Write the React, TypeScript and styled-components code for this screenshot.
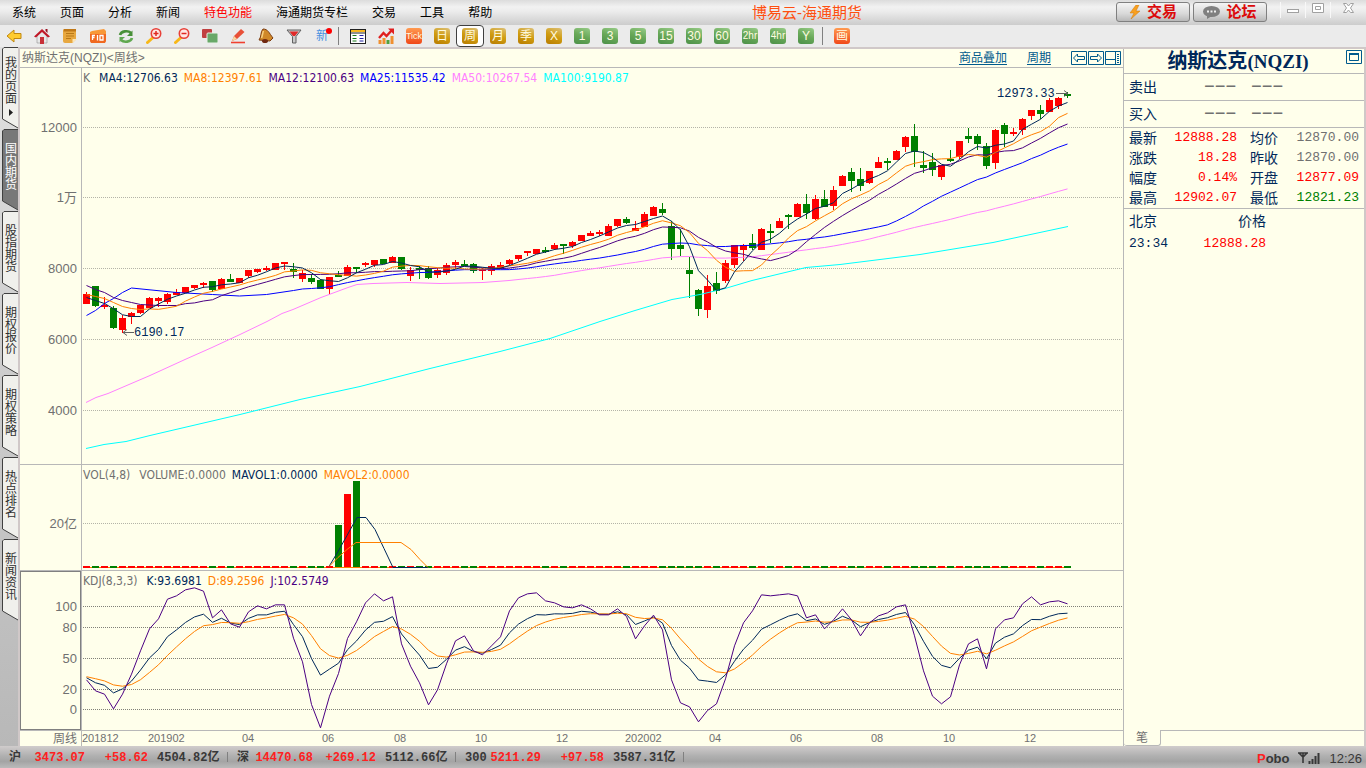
import React from 'react';
import styled, { createGlobalStyle } from 'styled-components';

const C = {
  paper: '#ffffeb',
  rule: '#b8b8b8',
  frame: '#d0c8c8',
  navy: '#00285a',
  orange: '#ff8000',
  indigo: '#4b0082',
  blue: '#0000ff',
  pink: '#ff80ff',
  cyan: '#00ffff',
  gray: '#707070',
  red: '#ff0000',
  green: '#008000',
  teal: '#005a8c',
};

const sans = `"Liberation Sans", "Noto Sans CJK SC", sans-serif`;
const mono = `"Liberation Mono", "Noto Sans CJK SC", monospace`;
const legendFont = `"DejaVu Sans Condensed", "DejaVu Sans", "Noto Sans CJK SC", sans-serif`;

const GlobalStyle = createGlobalStyle`
  * { box-sizing: border-box; }
  body { margin: 0; font-family: ${sans}; font-size: 12px; color: #000; }
  button { font-family: inherit; padding: 0; margin: 0; border: 0; background: none; color: inherit; }
  svg { display: block; }
  table { border-collapse: collapse; }
`;

/* ---------- data ---------- */

type Candle = [up: number, top: number, bottom: number, high: number, low: number];

const candles: Candle[] = [
  [1, 294, 304, 292, 304], [0, 286, 306, 286, 307], [1, 305, 306, 297, 309], [0, 308, 328, 306, 329],
  [1, 318, 330, 315, 333], [1, 313, 317, 312, 324], [1, 305, 313, 305, 314], [1, 298, 308, 297, 308],
  [1, 298, 301, 297, 307], [1, 294, 302, 293, 304], [1, 292, 295, 289, 295], [1, 287, 293, 287, 293],
  [1, 285, 288, 285, 289], [1, 283, 284, 282, 288], [0, 281, 290, 281, 292], [1, 279, 289, 278, 289],
  [0, 279, 282, 274, 282], [1, 278, 283, 278, 283], [1, 270, 276, 270, 278], [1, 269, 272, 269, 273],
  [1, 268, 270, 266, 271], [1, 263, 270, 263, 270], [1, 262, 264, 262, 270], [0, 269, 272, 263, 278],
  [1, 273, 279, 270, 282], [0, 278, 282, 274, 284], [0, 280, 289, 279, 289], [1, 277, 289, 277, 294],
  [0, 275, 276, 271, 277], [1, 267, 276, 265, 276], [0, 267, 269, 267, 273], [1, 263, 264, 262, 267],
  [1, 260, 265, 260, 267], [0, 259, 264, 259, 264], [1, 257, 263, 256, 263], [0, 257, 269, 257, 270],
  [1, 270, 276, 267, 281], [0, 268, 269, 266, 279], [0, 268, 278, 266, 279], [1, 270, 275, 268, 278],
  [1, 265, 273, 263, 275], [1, 262, 265, 260, 269], [0, 264, 265, 260, 266], [0, 264, 271, 263, 273],
  [1, 269, 271, 268, 280], [1, 266, 271, 264, 275], [1, 265, 268, 262, 269], [1, 260, 264, 259, 265],
  [1, 255, 259, 255, 261], [1, 251, 253, 251, 256], [1, 249, 254, 249, 254], [0, 250, 251, 247, 253],
  [1, 245, 249, 243, 250], [0, 244, 246, 244, 254], [1, 242, 246, 241, 248], [1, 235, 241, 235, 241],
  [1, 233, 236, 231, 236], [1, 232, 234, 230, 236], [1, 226, 236, 224, 236], [1, 219, 226, 219, 227],
  [0, 219, 223, 217, 224], [1, 228, 231, 221, 231], [1, 214, 227, 212, 227], [1, 207, 216, 206, 216],
  [0, 209, 213, 203, 215], [0, 226, 249, 221, 260], [0, 245, 249, 229, 256], [0, 270, 274, 257, 298],
  [0, 290, 309, 289, 316], [1, 286, 310, 275, 318], [0, 283, 291, 272, 294], [1, 263, 281, 260, 283],
  [1, 245, 265, 245, 268], [1, 245, 250, 244, 261], [0, 243, 248, 234, 250], [1, 229, 250, 228, 250],
  [0, 231, 233, 224, 243], [1, 221, 228, 218, 228], [0, 215, 216, 214, 229], [1, 204, 217, 203, 217],
  [0, 204, 213, 194, 219], [1, 199, 219, 195, 220], [0, 199, 207, 190, 207], [1, 190, 206, 186, 210],
  [1, 176, 186, 175, 186], [0, 172, 181, 168, 192], [0, 179, 186, 168, 191], [1, 171, 183, 171, 184],
  [1, 162, 168, 157, 168], [0, 161, 162, 158, 170], [1, 151, 160, 150, 160], [1, 137, 147, 136, 152],
  [0, 136, 152, 124, 167], [0, 165, 168, 151, 173], [0, 162, 170, 153, 176], [1, 165, 177, 165, 180],
  [0, 159, 160, 150, 162], [1, 141, 157, 141, 159], [0, 136, 139, 128, 143], [0, 136, 144, 134, 150],
  [0, 146, 166, 143, 169], [1, 130, 163, 129, 169], [0, 125, 134, 123, 147], [1, 132, 133, 128, 136],
  [1, 119, 130, 118, 135], [1, 110, 116, 110, 120], [0, 110, 114, 105, 119], [1, 100, 112, 98, 112],
  [1, 98, 106, 97, 109], [0, 94, 96, 92, 98],
];

const closes = candles.map(([up, top, bottom]) => (up ? top : bottom));

const STEP = 9;
const PRICE_TOP = 68;
const mid = (i: number) => 4.5 + STEP * i;

type Point = [number, number];

/* Moving average; `lead` covers the candles whose window starts before the data. */
function average(n: number, lead: Point[]): Point[] {
  const out = [...lead];
  for (let i = n - 1; i < closes.length; i++) {
    let sum = 0;
    for (let k = 0; k < n; k++) sum += closes[i - k];
    out.push([mid(i), sum / n]);
  }
  return out;
}

const each = (values: number[]): Point[] => values.map((v, i) => [mid(i), v]);
const shift = (points: Point[]): Point[] => points.map(([x, y]) => [x - 82, y]);

const averages: { color: string; points: Point[] }[] = [
  {
    color: C.cyan,
    points: shift([[86, 448], [104, 444], [126, 441], [150, 435], [240, 414], [300, 399], [360, 386], [430, 368],
      [500, 351], [550, 338], [600, 321], [635, 310], [672, 299], [700, 294], [725, 288], [752, 280], [806, 267],
      [840, 264], [880, 259], [920, 254], [993, 242], [1068, 226]]),
  },
  {
    color: C.pink,
    points: average(50, shift([[86, 402], [96, 397], [108, 393], [122, 387], [150, 375], [185, 359], [212, 347],
      [240, 334], [267, 321], [282, 313], [293, 309], [321, 297], [348, 287], [357, 284], [373, 283], [407, 282],
      [440, 283], [483, 282], [509, 280]])),
  },
  {
    color: C.blue,
    points: average(25, [...each([315, 310, 303, 298, 292, 287.5]), [mid(10), 292], [mid(14), 294], [mid(17), 295.5],
      [mid(20), 294], [mid(23), 290]]),
  },
  { color: C.indigo, points: average(12, each([285, 289, 292, 297, 300, 302, 304, 304.5, 305, 305, 305])) },
  { color: C.orange, points: average(8, each([294, 296, 298, 302, 306, 308, 309])) },
  { color: C.navy, points: average(4, each([297, 300, 303])) },
];

/* J values of the KDJ indicator in thirds of a pixel; K and D follow from it. */
const jValues = [
  328, 361, 371, 415, 371, 311, 241, 175, 145, 86, 76, 58, 52, 62, 142, 118, 160, 170, 124, 106, 115, 103, 103, 203,
  274, 402, 472, 377, 309, 204, 154, 97, 70, 91, 79, 220, 287, 337, 403, 358, 280, 211, 196, 241, 253, 226, 199, 121,
  82, 70, 67, 91, 97, 109, 112, 103, 115, 133, 133, 115, 138, 205, 166, 134, 178, 328, 397, 409, 454, 420, 400, 325,
  226, 157, 121, 73, 76, 73, 70, 76, 142, 133, 175, 148, 115, 148, 196, 157, 136, 127, 109, 103, 196, 301, 377, 400,
  379, 283, 220, 205, 295, 175, 148, 142, 100, 79, 103, 94, 91, 100,
];
const kdj = (() => {
  const k: Point[] = [];
  const d: Point[] = [];
  const j: Point[] = [];
  let prev = 317;
  jValues.forEach((v, i) => {
    const kv = (3 * v + 4 * prev) / 7;
    const dv = (2 * prev + kv) / 3;
    k.push([mid(i), kv / 3 - 1]);
    d.push([mid(i), dv / 3 - 1]);
    j.push([mid(i), v / 3 - 1]);
    prev = dv;
  });
  return { k, d, j };
})();

const path = (points: Point[], dy = 0) => points.map(([x, y]) => `${x},${y - dy + 0.5}`).join(' ');

/* ---------- shell ---------- */

const Shell = styled.div`
  min-height: 100vh;
  display: flex;
  flex-direction: column;
  background: ${C.paper};
`;

const MenuBar = styled.header`
  height: 25px;
  display: flex;
  align-items: center;
  background: linear-gradient(#dcdcdc 0, #f2f2f2 28%, #ececec 45%, #cccccc 100%);
`;

const MenuList = styled.nav`
  display: flex;
  gap: 24px;
  padding: 2px 0 0 12px;
`;

const MenuItem = styled.button<{ $hot?: boolean }>`
  font-size: 12px;
  line-height: 23px;
  color: ${(p) => (p.$hot ? C.red : '#000')};
  white-space: nowrap;
`;

const AppTitle = styled.div`
  flex: 1;
  padding-left: 6px;
  text-align: center;
  font-size: 15px;
  line-height: 24px;
  color: #ff4f10;
  white-space: nowrap;
`;

const TitleSide = styled.div`
  display: flex;
  justify-content: flex-end;
  gap: 3px;
  padding-bottom: 1px;
`;

const PillButton = styled.button`
  width: 74px;
  height: 20px;
  display: flex;
  align-items: center;
  justify-content: center;
  gap: 6px;
  border: 1px solid #808080;
  border-radius: 3px;
  background: linear-gradient(#f4f4f4, #d8d8d8 60%, #b8b8b8);
  font-size: 15px;
  font-weight: 700;
  line-height: 18px;
  color: #dc0a0a;
`;

const WindowButtons = styled.div`
  display: flex;
  padding-left: 10px;
`;

const WindowButton = styled.button`
  width: 25px;
  height: 16px;
  display: flex;
  justify-content: center;
  border-left: 1px solid #f8f8f8;
  &:last-child { width: 36px; }
`;

const Toolbar = styled.div`
  height: 24px;
  display: flex;
  background: #ebebeb;
  border-bottom: 2px solid ${C.frame};
`;

const ToolButton = styled.button<{ $active?: boolean }>`
  width: 28px;
  height: 22px;
  display: flex;
  align-items: center;
  justify-content: center;
  border: 1px solid ${(p) => (p.$active ? '#404040' : 'transparent')};
  border-radius: 4px;
  background: ${(p) => (p.$active ? '#fff' : 'none')};
`;

const ToolDivider = styled.i`
  width: 1px;
  height: 18px;
  margin: 2px 5px 0 2px;
  background: #808080;
`;

const chipTones = {
  red: 'linear-gradient(#ff9a50, #f04818)',
  gold: 'linear-gradient(20deg, #b87c00, #d09c10 50%, #dcc078)',
  green: 'linear-gradient(20deg, #4c9048, #68a858 50%, #98cc88)',
};

const Chip = styled.span<{ $tone: keyof typeof chipTones; $size: number }>`
  width: 16px;
  height: 16px;
  flex: none;
  display: flex;
  justify-content: center;
  border-radius: 3px;
  background: ${(p) => chipTones[p.$tone]};
  color: #fffbe0;
  font-size: ${(p) => p.$size}px;
  line-height: 16px;
  white-space: nowrap;
`;

const Body = styled.div`
  flex: 1;
  display: flex;
`;

const TabRail = styled.nav`
  width: 20px;
  margin-top: -2px;
  padding-left: 2px;
  border-right: 2px solid ${C.frame};
  background: linear-gradient(#e0e0e0, #b8b8b8);
`;

const RailTab = styled.button<{ $active?: boolean; $first?: boolean }>`
  position: relative;
  display: flex;
  align-items: flex-start;
  width: 16px;
  height: 82px;
  padding: ${(p) => (p.$first ? 10 : 14)}px 0 0 3px;
  color: ${(p) => (p.$active ? '#fff' : '#303030')};
  font-size: 12px;
  line-height: 12px;
  text-align: left;
`;

const TabShape = styled.svg`
  position: absolute;
  left: 0;
  top: 0;
`;

const TabText = styled.span`
  position: relative;
  display: block;
  width: 12px;
  word-break: break-all;
`;

/* ---------- chart ---------- */

const ChartColumn = styled.main`
  flex: 1;
  min-width: 0;
  display: flex;
  flex-direction: column;
`;

const ChartHead = styled.div`
  height: 19px;
  display: flex;
  align-items: center;
  padding: 0 1px 0 2px;
  border-bottom: 1px solid ${C.rule};
`;

const ChartName = styled.h1`
  flex: 1;
  margin: 0;
  font-size: 12px;
  font-weight: 400;
  line-height: 18px;
  color: ${C.gray};
`;

const HeadLink = styled.a`
  margin-right: 20px;
  font-size: 12px;
  line-height: 16px;
  color: ${C.teal};
  text-underline-offset: 2px;
`;

const HeadButton = styled.button`
  width: 16px;
  height: 14px;
  margin-right: 1px;
`;

const Panel = styled.section<{ $height: number; $grow?: boolean }>`
  flex: ${(p) => (p.$grow ? 1 : 0)} 0 ${(p) => p.$height}px;
  display: flex;
  border-bottom: 1px solid ${C.rule};
  &:last-child { border-bottom: 0; }
`;

const Axis = styled.div<{ $selected?: boolean }>`
  width: 61px;
  flex: none;
  outline: ${(p) => (p.$selected ? '1px solid #808080' : 'none')};
  outline-offset: -1px;
`;

const AxisText = styled.text`
  font: 13px ${sans};
  fill: ${C.gray};
`;

const TimeText = styled.text`
  font: 11px ${sans};
  fill: ${C.gray};
`;

const PeriodText = styled(TimeText)`
  font-size: 12px;
`;

const NoteText = styled.text`
  font: 12px ${mono};
  fill: ${C.navy};
`;

const Plot = styled.div`
  position: relative;
  flex: 1;
  min-width: 0;
  border-left: 1px solid ${C.rule};
`;

const Legend = styled.div`
  position: absolute;
  left: 1px;
  top: 3px;
  display: flex;
  gap: 6px;
  font-family: ${legendFont};
  font-size: 12px;
  line-height: 15px;
  white-space: nowrap;
`;

const LegendItem = styled.span<{ $color: string; $wide?: boolean }>`
  color: ${(p) => p.$color};
  margin-right: ${(p) => (p.$wide ? 3 : 0)}px;
`;

/* ---------- quote panel ---------- */

const QuotePanel = styled.aside`
  width: 243px;
  flex: none;
  display: flex;
  flex-direction: column;
  border-left: 1px solid ${C.rule};
  border-right: 2px solid ${C.frame};
  color: ${C.navy};
`;

const QuoteHead = styled.div`
  height: 25px;
  display: flex;
  padding-right: 1px;
  border-bottom: 1px solid ${C.rule};
`;

const QuoteName = styled.h2`
  flex: 1;
  margin: 0 0 0 6px;
  font-size: 20px;
  line-height: 24px;
  text-align: center;
`;

const QuoteCode = styled.span`
  font-family: "Liberation Serif", serif;
  font-size: 19px;
`;

const QuoteTable = styled.table`
  width: 100%;
  table-layout: fixed;
  border-bottom: 1px solid ${C.rule};
`;

const Label = styled.th`
  height: 20px;
  padding: 0 0 0 5px;
  font-size: 14px;
  font-weight: 400;
  line-height: 20px;
  text-align: left;
  td + & { padding-left: 8px; }
`;

const Value = styled.td<{ $color: string }>`
  padding: 0 5px 0 0;
  font-family: ${mono};
  font-size: 13px;
  line-height: 20px;
  text-align: right;
  color: ${(p) => p.$color};
`;

const BidRow = styled.div`
  height: 27px;
  display: grid;
  grid-template-columns: 75px 47px 1fr;
  padding-left: 5px;
  border-bottom: 1px solid ${C.rule};
  font-size: 14px;
  line-height: 27px;
`;

const Dashes = styled.span`
  font-family: ${mono};
  font-size: 18px;
  color: ${C.gray};
`;

const TickTable = styled.table`
  width: 142px;
  font-size: 14px;
  line-height: 22px;
  th, td { height: 23px; padding: 0; font-weight: 400; text-align: right; }
  th:first-child, td:first-child { padding-left: 5px; text-align: left; }
  td { font-family: ${mono}; font-size: 13px; }
  td:last-child { color: ${C.red}; }
`;

const QuoteFoot = styled.div`
  height: 16px;
  margin-top: auto;
  display: flex;
`;

const FootTab = styled.button`
  width: 37px;
  border-right: 1px solid ${C.rule};
  border-bottom: 1px solid ${C.rule};
  border-radius: 0 0 3px 3px;
  font-size: 12px;
  line-height: 14px;
  color: ${C.gray};
`;

const FootRule = styled.i`
  flex: 1;
  border-top: 1px solid ${C.rule};
`;

/* ---------- status bar ---------- */

const StatusBar = styled.footer`
  height: 22px;
  display: flex;
  align-items: center;
  padding: 2px 4px 0 9px;
  background: linear-gradient(#d0cccc, #b0b0b0 45%, #a4a4a4 70%, #bababa);
  color: #383838;
  font-family: ${mono};
  font-size: 12px;
  font-weight: 700;
`;

const Index = styled.div`
  display: grid;
  grid-template-columns: 76px 63px 70px 10px;
  width: 228px;
  line-height: 20px;
  white-space: nowrap;
`;

const IndexPrice = styled.span`
  display: flex;
  justify-content: space-between;
`;

const Rise = styled.span`
  color: #ff2020;
  text-align: right;
`;

const Turnover = styled.span`
  padding-left: 9px;
`;

const IndexRule = styled.i`
  width: 1px;
  height: 10px;
  margin: 4px 0 0 9px;
  background: #808080;
`;

const StatusEnd = styled.div`
  margin-left: auto;
  display: flex;
  align-items: center;
  gap: 9px;
  font-family: ${sans};
  font-size: 13px;
`;

const Clock = styled.time`
  font-weight: 400;
`;

/* ---------- icons ---------- */

const icons: Record<string, React.ReactNode> = {
  back: <path d="M1 8 8 2v3.500h7v5H8V14z" fill="#ffcc30" stroke="#c08810" strokeLinejoin="round" />,
  home: (
    <>
      <path d="M3 8v7h10V8L8 3z" fill="#e8e8e8" stroke="#909090" strokeWidth=".6" />
      <path d="M0 8.500 8 1l8 7.500-2 1L8 4 2 9.500z" fill="#c01828" />
      <path d="M11.500 1h2v4l-2-2z" fill="#981020" />
      <path d="M6 9h4v7H6z" fill="#c83038" />
    </>
  ),
  notes: (
    <>
      <path d="M2 1h12v10.500L10.500 15H3q-2 0-2-2V3q0-2 1-2z" fill="#e8a840" />
      <path d="M2 1h12v2.500H1.500z" fill="#c07818" />
      <path d="M4 5.500h8M4 8h8M4 10.500h5" stroke="#b87818" />
      <path d="M15 11h-4.500V15z" fill="#fbe6b8" />
    </>
  ),
  f10: (
    <>
      <path d="M0 4l2-1 12-2 2 2v10l-2 2H2l-2-2z" fill="#f89838" />
      <path d="M0 6h16v7l-1 2H1l-1-2z" fill="#f06820" />
      <path d="M2.500 12V7.500H5M2.500 9.500h2M7.500 7v5.500M10 7.500h3V12h-3z" stroke="#fff" strokeWidth="1.300" fill="none" />
    </>
  ),
  refresh: (
    <>
      <path d="M2 7c1-4 8-5 11-2" stroke="#489038" strokeWidth="2.600" fill="none" />
      <path d="M14.500 2.500V8H9z" fill="#489038" />
      <path d="M14 10c-1 4-8 5-11 2" stroke="#60a850" strokeWidth="2.600" fill="none" />
      <path d="M1.500 14V9H7z" fill="#60a850" />
    </>
  ),
  zoomIn: (
    <>
      <path d="M1.500 14.500 7 9.500" stroke="#f8b818" strokeWidth="3" strokeLinecap="round" />
      <circle cx="10" cy="5.500" r="4.700" fill="#ffe8e4" stroke="#e84038" strokeWidth="1.600" />
      <path d="M7.500 5.500h5M10 3v5" stroke="#e02820" strokeWidth="1.500" />
    </>
  ),
  zoomOut: (
    <>
      <path d="M1.500 14.500 7 9.500" stroke="#f8b818" strokeWidth="3" strokeLinecap="round" />
      <circle cx="10" cy="5.500" r="4.700" fill="#ffe8e4" stroke="#e84038" strokeWidth="1.600" />
      <path d="M7.500 5.500h5" stroke="#e02820" strokeWidth="1.500" />
    </>
  ),
  layers: (
    <>
      <rect x="0" y="1" width="10" height="9" rx="1" fill="#c04040" />
      <rect x="5" y="5" width="11" height="10" rx="1" fill="#68a868" stroke="#e8f0e8" />
    </>
  ),
  pencil: (
    <>
      <path d="M2 13 4 8 11 1l3.500 3L7 11z" fill="#e85038" />
      <path d="M2 13 4 8l3 3z" fill="#f8d8a0" />
      <path d="M1 14.500h14" stroke="#f04030" strokeWidth="1.600" />
    </>
  ),
  bell: (
    <>
      <path d="M5 1c5 0 6 4 10 9l-3 3-11-1c3-4 1-8 4-11z" fill="#d08828" stroke="#7c3c10" />
      <path d="M5.500 3c-1 2-1 5-2 7" stroke="#f8d080" strokeWidth="1.500" fill="none" />
      <ellipse cx="7" cy="13" rx="3" ry="2" fill="#702810" />
    </>
  ),
  filter: (
    <>
      <path d="M1 2h14l-5 6.500V15H6.500V8.500z" fill="#c8c8c8" stroke="#606060" />
      <path d="M3.500 3.500h9L9 8H7z" fill="#e02828" />
    </>
  ),
  list: (
    <>
      <rect x=".5" y="1.500" width="15" height="14" fill="#fff" stroke="#202020" />
      <path d="M1 3h14" stroke="#f8b820" strokeWidth="2" />
      <path d="M0 5h16" stroke="#202020" />
      <path d="M2.500 7.500h4M2.500 10.500h4M2.500 13h4" stroke="#187818" />
      <path d="M9.500 7.500h4M9.500 10.500h4M9.500 13h4" stroke="#2020a0" />
    </>
  ),
  trend: (
    <>
      <path d="M2 16v-4M6 16v-6M14 16V8" stroke="#f09030" strokeWidth="3" />
      <path d="M10 16v-4" stroke="#50a040" strokeWidth="3" />
      <path d="M1 10 5.500 5l3 3L14 2" stroke="#e02020" strokeWidth="2.400" fill="none" />
      <path d="M10 .5h6v6z" fill="#e02020" />
    </>
  ),
};

const Icon = ({ name }: { name: string }) => (
  <svg width="16" height="16" viewBox="0 0 16 16" fill="none" aria-hidden>
    {icons[name]}
  </svg>
);

const NewMark = styled.span`
  position: relative;
  font-size: 12px;
  line-height: 16px;
  color: #4890e0;
  &::after {
    content: '';
    position: absolute;
    right: -4px;
    top: 0;
    width: 6px;
    height: 6px;
    border-radius: 50%;
    background: ${C.red};
  }
`;

const iconTools: [string, string][] = [
  ['back', '返回'], ['home', '首页'], ['notes', '公告'], ['f10', 'F10'], ['refresh', '刷新'], ['zoomIn', '放大'],
  ['zoomOut', '缩小'], ['layers', '叠加'], ['pencil', '画线'], ['bell', '预警'], ['filter', '筛选'],
];

const periods: [string, keyof typeof chipTones][] = [
  ['Tick', 'red'], ['日', 'gold'], ['周', 'gold'], ['月', 'gold'], ['季', 'gold'], ['X', 'gold'], ['1', 'green'],
  ['3', 'green'], ['5', 'green'], ['15', 'green'], ['30', 'green'], ['60', 'green'], ['2hr', 'green'],
  ['4hr', 'green'], ['Y', 'green'],
];

const chipSize = (text: string) => (text.length > 3 ? 9 : text.length > 2 ? 10 : 12);

const menus = ['系统', '页面', '分析', '新闻', '特色功能', '海通期货专栏', '交易', '工具', '帮助'];
const tabs = ['我的页面', '国内期货', '股指期货', '期权报价', '期权策略', '热点排名', '新闻资讯'];

const GridLine = ({ y, color = '#b4b4a8' }: { y: number; color?: string }) => (
  <line x1="1" x2="100%" y1={y + 0.5} y2={y + 0.5} stroke={color} strokeDasharray="1 1" shapeRendering="crispEdges" />
);

const Line = ({ points, color, dy = 0 }: { points: Point[]; color: string; dy?: number }) => (
  <polyline points={path(points, dy)} fill="none" stroke={color} strokeWidth="1" />
);

const priceTicks: [string, number][] = [['12000', 59], ['1万', 129], ['8000', 200], ['6000', 271], ['4000', 342]];
const volumeTicks: [string, number][] = [['20亿', 58]];
const kdjTicks: [string, number][] = [['100', 35], ['80', 56], ['50', 87], ['20', 118], ['0', 138]];

const timeTicks: [string, number][] = [
  ['201812', 0], ['201902', 66], ['04', 160], ['06', 240], ['08', 312], ['10', 393], ['12', 474], ['202002', 543],
  ['04', 627], ['06', 708], ['08', 789], ['10', 861], ['12', 942],
];

const AxisScale = ({ ticks, height }: { ticks: [string, number][]; height: number }) => (
  <svg width="61" height={height}>
    {ticks.map(([text, y]) => (
      <AxisText key={text} x="57" y={y + 5} textAnchor="end">{text}</AxisText>
    ))}
  </svg>
);

const PricePlot = () => (
  <svg width="100%" height="396">
    {priceTicks.map(([t, y]) => <GridLine key={t} y={y} />)}
    <g shapeRendering="crispEdges">
      {candles.map(([up, top, bottom, high, low], i) => (
        <g key={i} fill={up ? C.red : C.green}>
          <rect x={STEP * i + 1} y={top - PRICE_TOP} width="7" height={Math.max(2, bottom - top)} />
          <rect x={STEP * i + 4} y={high - PRICE_TOP} width="1" height={low - high} />
        </g>
      ))}
    </g>
    {averages.map((a) => <Line key={a.color} points={a.points} color={a.color} dy={PRICE_TOP} />)}
    <g stroke="#606060" fill="none">
      <path d="M974 25.500h12M982 22.500l4 3-4 3" />
      <path d="M52 264.500H41M45 261.500l-4 3 4 3" />
    </g>
    <NoteText x="915" y="29">12973.33</NoteText>
    <NoteText x="52" y="268">6190.17</NoteText>
  </svg>
);

const volumes: Record<number, number> = { 28: 60, 29: 29, 30: 16 };

const VolumePlot = () => (
  <svg width="100%" height="105">
    <GridLine y={58} />
    <line x1="4" x2="986" y1="102.500" y2="102.500" stroke={C.orange} />
    <g shapeRendering="crispEdges">
      {candles.map(([up], i) => {
        const top = volumes[i] ?? 101;
        return (
          <rect key={i} x={STEP * i + 1} y={top} width="7" height={(volumes[i] ? 102 : 103) - top} fill={i !== 28 && up ? C.red : C.green} />
        );
      })}
    </g>
    <Line color={C.navy} points={[[247, 101], [256, 86], [265, 70], [275, 52], [284, 52], [293, 64], [302, 83], [311, 102], [346, 102]]} />
    <Line color={C.orange} points={[[247, 101], [256, 92], [265, 84], [274, 77], [319, 77], [329, 84], [338, 94], [346, 102]]} />
  </svg>
);

const KdjPlot = () => (
  <svg width="100%" height="159">
    {kdjTicks.map(([t, y]) => <GridLine key={t} y={y} color="#808078" />)}
    <Line points={kdj.k} color={C.navy} />
    <Line points={kdj.d} color={C.orange} />
    <Line points={kdj.j} color={C.indigo} />
  </svg>
);

const quotes: [string, string, string, string, string, string][] = [
  ['最新', '12888.28', C.red, '均价', '12870.00', C.gray],
  ['涨跌', '18.28', C.red, '昨收', '12870.00', C.gray],
  ['幅度', '0.14%', C.red, '开盘', '12877.09', C.red],
  ['最高', '12902.07', C.red, '最低', '12821.23', C.green],
];

const indices = [
  ['沪', '3473.07', '+58.62', '4504.82亿'],
  ['深', '14470.68', '+269.12', '5112.66亿'],
  ['300', '5211.29', '+97.58', '3587.31亿'],
];

export default function App() {
  return (
    <Shell>
      <GlobalStyle />
      <MenuBar>
        <MenuList>
          {menus.map((m) => <MenuItem key={m} $hot={m === '特色功能'}>{m}</MenuItem>)}
        </MenuList>
        <AppTitle>博易云-海通期货</AppTitle>
        <TitleSide>
          <PillButton>
            <svg width="12" height="14" viewBox="0 0 12 14"><path d="M7 0 1 8h4l-3 6 9-8H7l3-6z" fill="#f8a020" stroke="#d07808" strokeWidth=".5" /></svg>
            交易
          </PillButton>
          <PillButton>
            <svg width="17" height="13" viewBox="0 0 17 13">
              <ellipse cx="8.500" cy="5.500" rx="8.500" ry="5.500" fill="#808080" />
              <path d="M4 9v4l5-3z" fill="#808080" />
              <path d="M4 5.500h2M7.500 5.500h2M11 5.500h2" stroke="#f0f0f0" strokeWidth="2" />
            </svg>
            论坛
          </PillButton>
          <WindowButtons>
            <WindowButton aria-label="最小化">
              <svg width="13" height="14"><rect x=".5" y="7.500" width="11" height="3" fill="#fff" stroke="#a0a0a0" /></svg>
            </WindowButton>
            <WindowButton aria-label="最大化">
              <svg width="13" height="14"><path d="M.5 1.500h11v9H.5zM3.500 4.500h5v3h-5z" fill="#fff" stroke="#a0a0a0" /></svg>
            </WindowButton>
            <WindowButton aria-label="关闭">
              <svg width="13" height="14"><path d="M1.500 1.500h3l2 2.500 2-2.500h3L8.500 6l3 4.500h-3l-2-2.500-2 2.500h-3L4.500 6z" fill="#fff" stroke="#a0a0a0" /></svg>
            </WindowButton>
          </WindowButtons>
        </TitleSide>
      </MenuBar>

      <Toolbar role="toolbar">
        {iconTools.map(([name, label]) => (
          <ToolButton key={name} aria-label={label}><Icon name={name} /></ToolButton>
        ))}
        <ToolButton><NewMark>新</NewMark></ToolButton>
        <ToolDivider />
        <ToolButton aria-label="报价"><Icon name="list" /></ToolButton>
        <ToolButton aria-label="走势"><Icon name="trend" /></ToolButton>
        {periods.map(([text, tone]) => (
          <ToolButton key={text} $active={text === '周'}>
            <Chip $tone={tone} $size={chipSize(text)}>{text}</Chip>
          </ToolButton>
        ))}
        <ToolDivider />
        <ToolButton><Chip $tone="red" $size={12}>画</Chip></ToolButton>
      </Toolbar>

      <Body>
        <TabRail>
          {tabs.map((tab, i) => (
            <RailTab key={tab} $active={i === 1} $first={i === 0}>
              <TabShape width="16" height="82" fill="none">
                <path d="M16 .5H2L.5 2v70l15.500 9z" fill={i === 1 ? '#787878' : '#f0f0ec'} />
                <path d="M16 .5H2L.5 2v70l15.500 9" stroke="#404040" />
                {i === 0 && <path d="M7 62v7l4-3.500z" fill="#202020" />}
              </TabShape>
              <TabText>{tab}</TabText>
            </RailTab>
          ))}
        </TabRail>

        <ChartColumn>
          <ChartHead>
            <ChartName>纳斯达克(NQZI)&lt;周线&gt;</ChartName>
            <HeadLink href="#overlay">商品叠加</HeadLink>
            <HeadLink href="#period">周期</HeadLink>
            <HeadButton aria-label="向左">
              <svg width="16" height="14" fill="none" stroke={C.teal}><path d="M.5.5h15v13H.5zM2.500 7l4-4v2.500h7v3h-7V11z" /></svg>
            </HeadButton>
            <HeadButton aria-label="向右">
              <svg width="16" height="14" fill="none" stroke={C.teal}><path d="M.5.5h15v13H.5zM13.500 7l-4-4v2.500h-7v3h7V11z" /></svg>
            </HeadButton>
            <HeadButton aria-label="布局">
              <svg width="16" height="14" fill="none" stroke={C.teal}>
                <path d="M.5.5h15v13H.5zM10.500.5v13M.5 8.500h10" />
                <path d="M12 3.500h2M12 5.500h2M12 7.500h2M12 9.500h2M12 11.500h2" />
              </svg>
            </HeadButton>
          </ChartHead>

          <Panel $height={397} $grow>
            <Axis><AxisScale ticks={priceTicks} height={396} /></Axis>
            <Plot>
              <PricePlot />
              <Legend>
                <LegendItem $color={C.gray} $wide>K</LegendItem>
                <LegendItem $color={C.navy}>MA4:12706.63</LegendItem>
                <LegendItem $color={C.orange}>MA8:12397.61</LegendItem>
                <LegendItem $color={C.indigo}>MA12:12100.63</LegendItem>
                <LegendItem $color={C.blue}>MA25:11535.42</LegendItem>
                <LegendItem $color={C.pink}>MA50:10267.54</LegendItem>
                <LegendItem $color={C.cyan}>MA100:9190.87</LegendItem>
              </Legend>
            </Plot>
          </Panel>

          <Panel $height={106}>
            <Axis><AxisScale ticks={volumeTicks} height={105} /></Axis>
            <Plot>
              <VolumePlot />
              <Legend>
                <LegendItem $color={C.gray} $wide>VOL(4,8)</LegendItem>
                <LegendItem $color={C.gray}>VOLUME:0.0000</LegendItem>
                <LegendItem $color={C.navy}>MAVOL1:0.0000</LegendItem>
                <LegendItem $color={C.orange}>MAVOL2:0.0000</LegendItem>
              </Legend>
            </Plot>
          </Panel>

          <Panel $height={160}>
            <Axis $selected><AxisScale ticks={kdjTicks} height={159} /></Axis>
            <Plot>
              <KdjPlot />
              <Legend>
                <LegendItem $color={C.gray} $wide>KDJ(8,3,3)</LegendItem>
                <LegendItem $color={C.navy}>K:93.6981</LegendItem>
                <LegendItem $color={C.orange}>D:89.2596</LegendItem>
                <LegendItem $color={C.indigo}>J:102.5749</LegendItem>
              </Legend>
            </Plot>
          </Panel>

          <Panel $height={15}>
            <Axis>
              <svg width="61" height="15"><PeriodText x="57" y="12" textAnchor="end">周线</PeriodText></svg>
            </Axis>
            <Plot>
              <svg width="100%" height="15">
                {timeTicks.map(([text, x]) => <TimeText key={x} x={x} y="11">{text}</TimeText>)}
              </svg>
            </Plot>
          </Panel>
        </ChartColumn>

        <QuotePanel>
          <QuoteHead>
            <QuoteName>纳斯达克<QuoteCode>(NQZI)</QuoteCode></QuoteName>
            <HeadButton aria-label="展开">
              <svg width="16" height="15" fill="none" stroke={C.teal}>
                <path d="M.5 1.500h15v13H.5zM3.500 4.500h9v7h-9z" />
                <path d="M3 5h10" strokeWidth="2" />
              </svg>
            </HeadButton>
          </QuoteHead>
          <BidRow><span>卖出</span><Dashes>−−−</Dashes><Dashes>−−−</Dashes></BidRow>
          <BidRow><span>买入</span><Dashes>−−−</Dashes><Dashes>−−−</Dashes></BidRow>
          <QuoteTable>
            <colgroup><col width="45" /><col width="73" /><col width="50" /><col /></colgroup>
            <tbody>
              {quotes.map(([a, av, ac, b, bv, bc]) => (
                <tr key={a}>
                  <Label scope="row">{a}</Label>
                  <Value $color={ac}>{av}</Value>
                  <Label scope="row">{b}</Label>
                  <Value $color={bc}>{bv}</Value>
                </tr>
              ))}
            </tbody>
          </QuoteTable>
          <TickTable>
            <thead><tr><th>北京</th><th>价格</th></tr></thead>
            <tbody><tr><td>23:34</td><td>12888.28</td></tr></tbody>
          </TickTable>
          <QuoteFoot><FootTab>笔</FootTab><FootRule /></QuoteFoot>
        </QuotePanel>
      </Body>

      <StatusBar>
        {indices.map(([name, price, change, turnover]) => (
          <Index key={name}>
            <IndexPrice><span>{name}</span><Rise>{price}</Rise></IndexPrice>
            <Rise>{change}</Rise>
            <Turnover>{turnover}</Turnover>
            <IndexRule />
          </Index>
        ))}
        <StatusEnd>
          <span><Rise>P</Rise>obo</span>
          <svg width="22" height="12" viewBox="0 0 22 12" fill="none" stroke="#383838">
            <path d="M0 1h10M1 1l4 4 4-4M5 1v10" strokeWidth="1.600" />
            <path d="M11.500 9v3M14.500 7v5M17.500 4v8M20.500 1v11" strokeWidth="2" />
          </svg>
          <Clock>12:26</Clock>
        </StatusEnd>
      </StatusBar>
    </Shell>
  );
}
